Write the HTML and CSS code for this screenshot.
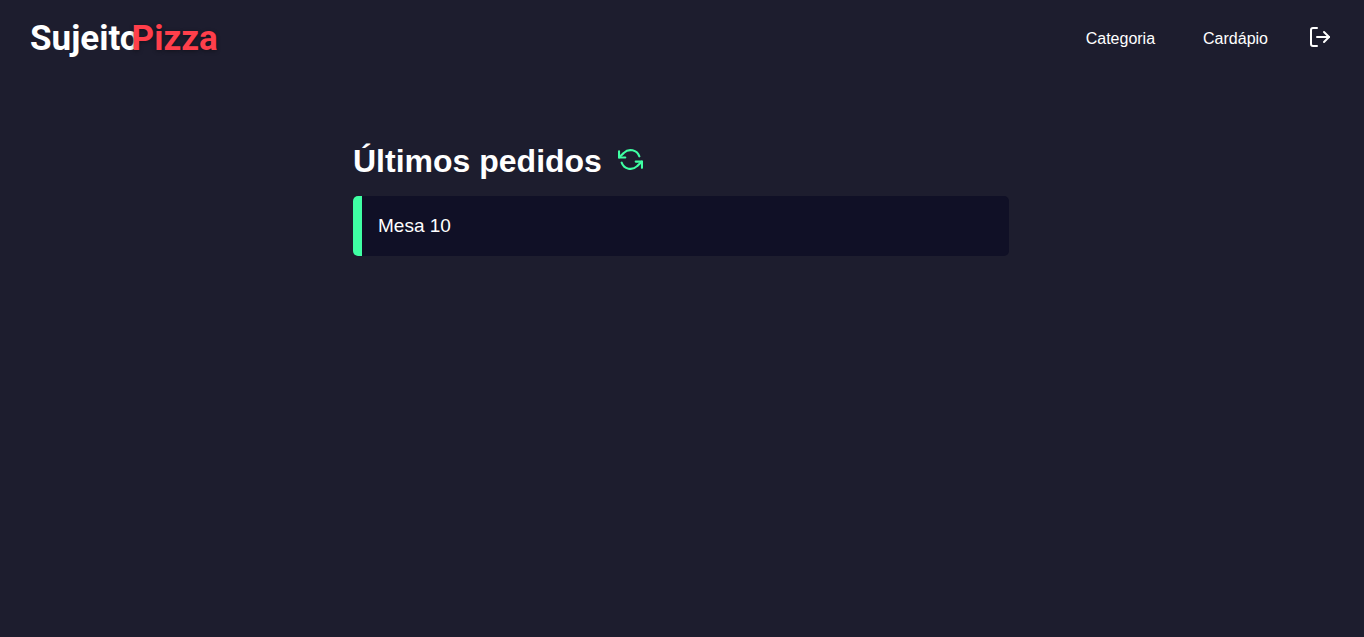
FILE: index.html
```html
<!DOCTYPE html>
<html lang="pt-BR">
<head>
<meta charset="utf-8">
<meta name="viewport" content="width=device-width, initial-scale=1">
<title>Painel - Sujeito Pizza</title>
<link rel="stylesheet" href="styles.css">
</head>
<body>
<header class="header">
  <a class="logo" href="#"><span class="logo-first">Sujeito</span><span class="logo-second">Pizza</span></a>
  <nav class="menu">
    <a class="menu-link" href="#categoria">Categoria</a>
    <a class="menu-link" href="#cardapio">Cardápio</a>
    <button class="icon-button logout" type="button" aria-label="Sair">
      <svg class="icon" width="24" height="24" viewBox="0 0 24 24" aria-hidden="true"><path d="M9 21H5a2 2 0 0 1-2-2V5a2 2 0 0 1 2-2h4"/><path d="M16 17l5-5-5-5"/><path d="M21 12H9"/></svg>
    </button>
  </nav>
</header>
<main class="container">
  <div class="title-row">
    <h1 class="title">Últimos pedidos</h1>
    <button class="icon-button refresh" type="button" aria-label="Atualizar pedidos">
      <svg class="icon" width="25" height="25" viewBox="0 0 24 24" aria-hidden="true"><path d="M1 4v6h6"/><path d="M23 20v-6h-6"/><path d="M20.49 9A9 9 0 0 0 5.64 5.64L1 10m22 4l-4.64 4.36A9 9 0 0 1 3.51 15"/></svg>
    </button>
  </div>
  <section class="orders">
    <button class="order" type="button"><span class="order-tag"></span><span class="order-name">Mesa 10</span></button>
  </section>
</main>
</body>
</html>
```
FILE: styles.css
```css
:root {
  --background: #1d1d2e;
  --dark: #101026;
  --white: #fff;
  --green: #3fffa3;
  --red: #ff3f4b;
}

* {
  box-sizing: border-box;
  margin: 0;
  padding: 0;
}

body {
  min-height: 100vh;
  background: var(--background);
  color: var(--white);
  font-family: Arial, "Liberation Sans", sans-serif;
  font-size: 16px;
}

a {
  color: inherit;
  text-decoration: none;
}

button {
  border: 0;
  background: transparent;
  color: inherit;
  font: inherit;
  cursor: pointer;
}

.header {
  display: flex;
  align-items: center;
  justify-content: space-between;
  height: 78px;
  padding: 0 32px 0 30px;
}

.logo {
  font-family: Roboto, sans-serif;
  font-size: 35px;
  font-weight: 700;
  line-height: 44px;
}

.logo-second {
  margin-left: -8px;
  color: var(--red);
  text-shadow: 0 1px 4px rgba(0, 0, 0, 0.4);
}

.menu {
  display: flex;
  align-items: center;
  gap: 48px;
}

.icon-button {
  display: flex;
  padding-bottom: 4px;
}

.logout {
  margin-left: -8px;
}

.icon {
  fill: none;
  stroke: currentColor;
  stroke-width: 2;
  stroke-linecap: round;
  stroke-linejoin: round;
}

.container {
  max-width: 720px;
  margin: 62px auto 0;
  padding: 0 33px 0 31px;
}

.title-row {
  display: flex;
  align-items: center;
  gap: 16px;
}

.title {
  font-size: 32px;
  font-weight: 700;
  line-height: 42px;
}

.refresh {
  color: var(--green);
}

.orders {
  display: flex;
  flex-direction: column;
  gap: 16px;
  margin-top: 14px;
}

.order {
  display: flex;
  align-items: center;
  gap: 16px;
  width: 100%;
  height: 60px;
  overflow: hidden;
  border-radius: 5px;
  background: var(--dark);
  font-size: 19px;
}

.order-tag {
  align-self: stretch;
  width: 9px;
  background: var(--green);
}
```
